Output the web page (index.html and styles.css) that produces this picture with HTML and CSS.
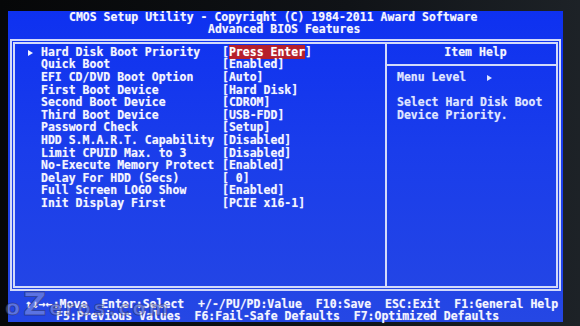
FILE: index.html
```html
<!DOCTYPE html>
<html lang="en">
<head>
  <meta charset="UTF-8" />
  <meta name="viewport" content="width=device-width, initial-scale=1.0" />
  <title>Advanced BIOS Features</title>
  <link rel="stylesheet" href="styles.css">
</head>
<body>
  <div class="screen">
    <!-- Title -->
    <header class="title">
      <div class="title-main">CMOS Setup Utility - Copyright (C) 1984-2011 Award Software</div>
      <div class="title-sub">Advanced BIOS Features</div>
    </header>

    <div class="frame">
      <!-- Menu items -->
      <div class="menu">
        <div class="item"><span class="pointer"><i class="tri"></i></span><span class="name">Hard Disk Boot Priority</span><span class="value">[<span class="selected">Press Enter</span>]</span></div>
        <div class="item"><span class="pointer"></span><span class="name">Quick Boot</span><span class="value">[Enabled]</span></div>
        <div class="item"><span class="pointer"></span><span class="name">EFI CD/DVD Boot Option</span><span class="value">[Auto]</span></div>
        <div class="item"><span class="pointer"></span><span class="name">First Boot Device</span><span class="value">[Hard Disk]</span></div>
        <div class="item"><span class="pointer"></span><span class="name">Second Boot Device</span><span class="value">[CDROM]</span></div>
        <div class="item"><span class="pointer"></span><span class="name">Third Boot Device</span><span class="value">[USB-FDD]</span></div>
        <div class="item"><span class="pointer"></span><span class="name">Password Check</span><span class="value">[Setup]</span></div>
        <div class="item"><span class="pointer"></span><span class="name">HDD S.M.A.R.T. Capability</span><span class="value">[Disabled]</span></div>
        <div class="item"><span class="pointer"></span><span class="name">Limit CPUID Max. to 3</span><span class="value">[Disabled]</span></div>
        <div class="item"><span class="pointer"></span><span class="name">No-Execute Memory Protect</span><span class="value">[Enabled]</span></div>
        <div class="item"><span class="pointer"></span><span class="name">Delay For HDD (Secs)</span><span class="value">[ 0]</span></div>
        <div class="item"><span class="pointer"></span><span class="name">Full Screen LOGO Show</span><span class="value">[Enabled]</span></div>
        <div class="item"><span class="pointer"></span><span class="name">Init Display First</span><span class="value">[PCIE x16-1]</span></div>
      </div>

      <!-- Item help -->
      <div class="help">
        <div class="help-head">Item Help</div>
        <div class="help-body">
          <div class="help-line">Menu Level   <i class="tri"></i></div>
          <div class="help-line">&nbsp;</div>
          <div class="help-line">Select Hard Disk Boot</div>
          <div class="help-line">Device Priority.</div>
        </div>
      </div>
    </div>

    <!-- Key bar -->
    <footer class="keys">
      <div class="keys-top">↑↓→←:Move  Enter:Select  +/-/PU/PD:Value  F10:Save  ESC:Exit  F1:General Help</div>
      <div class="keys-bottom">F5:Previous Values  F6:Fail-Safe Defaults  F7:Optimized Defaults</div>
    </footer>

    <div class="watermark"><span class="wm-o">o</span><span class="wm-z">Z</span>eros.com</div>
  </div>
</body>
</html>
```

FILE: styles.css
```css
* {
  box-sizing: border-box;
}

body {
  margin: 0;
  width: 580px;
  height: 326px;
  overflow: hidden;
  background: linear-gradient(to right, #060708 0%, #101317 60%, #1d2227 100%);
  font-family: "DejaVu Sans Mono", "Liberation Mono", monospace;
  font-weight: bold;
  font-size: 11.5px;
  color: #f4f5ff;
}

.screen {
  position: relative;
  margin: 11px 0 0 8px;
  width: 555px;
  height: 311px;
  background: linear-gradient(to bottom, #0e31f0 0%, #1a3deb 45%, #2547e4 100%);
  text-shadow: 0 0 1px rgba(255, 255, 255, 0.45);
}

/* Title */

.title {
  line-height: 12.4px;
}

.title-main,
.title-sub {
  white-space: pre;
}

.title-main {
  padding-left: 61px;
}

.title-sub {
  padding-left: 200px;
}

/* Frame */

.frame {
  display: flex;
  margin: 3px 2px 0 2px;
  height: 252px;
  border: 5px double #d3dafa;
}

.menu {
  width: 372px;
  padding-top: 2px;
  border-right: 2px solid #d3dafa;
}

.item {
  display: flex;
  height: 12.6px;
  line-height: 12.6px;
  white-space: pre;
}

.pointer {
  width: 26px;
  padding-left: 13px;
}

.name {
  width: 181px;
}

.selected {
  background: #b61f2b;
  color: #ffffff;
}

.tri {
  display: inline-block;
  width: 0;
  height: 0;
  border-left: 5px solid #f4f5ff;
  border-top: 3px solid transparent;
  border-bottom: 3px solid transparent;
  vertical-align: 0;
}

.help {
  flex: 1;
}

.help-head {
  height: 22px;
  padding-top: 2px;
  line-height: 12.6px;
  text-align: center;
  padding-left: 8px;
  border-bottom: 2px solid #d3dafa;
}

.help-body {
  padding: 5px 0 0 10px;
  color: #dfe5ff;
}

.help-line {
  height: 12.6px;
  line-height: 12.6px;
  white-space: pre;
}

.help-line .tri {
  border-left-color: #dfe5ff;
}

/* Key bar */

.keys {
  margin-top: 7px;
  line-height: 12.5px;
}

.keys-top,
.keys-bottom {
  white-space: pre;
}

.keys-top {
  padding-left: 17px;
}

.keys-bottom {
  padding-left: 48px;
}

/* Photo watermark */

.watermark {
  position: absolute;
  left: -3px;
  bottom: 3px;
  font-family: "DejaVu Sans", sans-serif;
  font-weight: bold;
  font-size: 19px;
  line-height: 22px;
  letter-spacing: 3px;
  color: rgba(185, 190, 225, 0.4);
  -webkit-text-stroke: 1px rgba(30, 34, 70, 0.45);
  text-shadow: none;
}

.wm-o {
  font-size: 22px;
}

.wm-z {
  font-size: 32px;
}
```
